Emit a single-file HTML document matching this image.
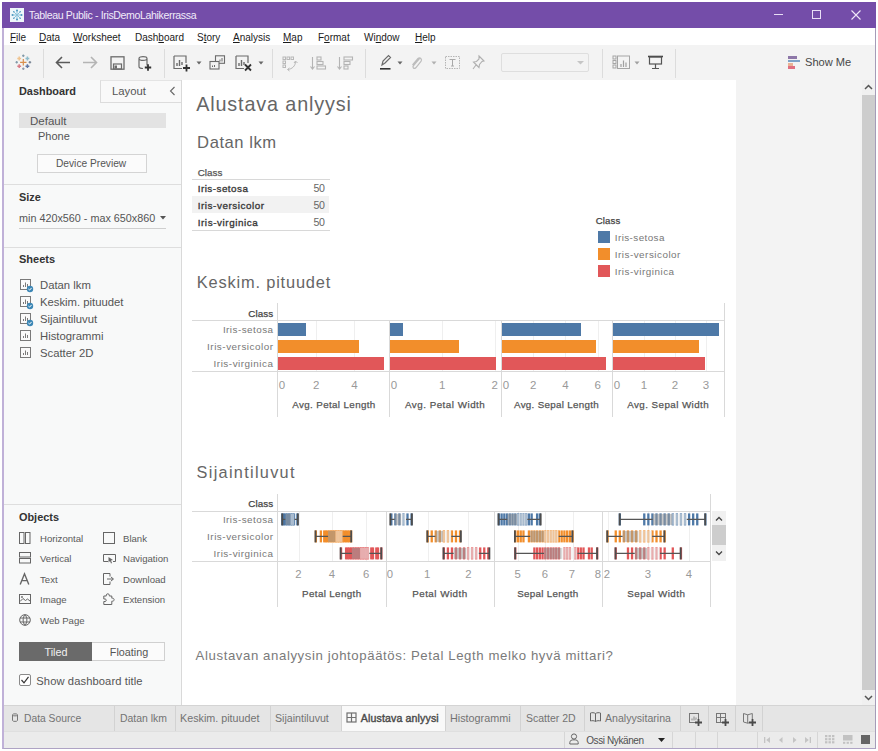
<!DOCTYPE html>
<html><head><meta charset="utf-8">
<style>
*{margin:0;padding:0;box-sizing:border-box}
html,body{width:878px;height:751px;overflow:hidden;background:#fff;font-family:"Liberation Sans",sans-serif;color:#333;position:relative}
.a{position:absolute;white-space:nowrap;line-height:normal}
svg.a{overflow:visible}
u{text-decoration:underline;text-underline-offset:1px}
</style></head><body>
<div class="a" style="left:2px;top:2px;width:874px;height:747px;background:#f0f0f0;border-left:2px solid #c0b1d8;border-right:1px solid #a59cb8;border-bottom:1px solid #aea3c4"></div>
<div class="a" style="left:2px;top:2px;width:874px;height:26px;background:#744da9;"></div>
<svg class="a" style="left:10px;top:8px;" width="14" height="14" viewBox="0 0 14 14"><rect x="0" y="0" width="14" height="14" fill="#eef6fa"/><g stroke="#8cc3dc" stroke-width="1" fill="none"><path d="M7 2.5v9M2.5 7h9M4 4l6 6M10 4l-6 6"/></g><g fill="#4b97c0"><circle cx="7" cy="2.5" r="1"/><circle cx="7" cy="11.5" r="1"/><circle cx="2.5" cy="7" r="1"/><circle cx="11.5" cy="7" r="1"/><circle cx="3.8" cy="3.8" r=".8"/><circle cx="10.2" cy="10.2" r=".8"/><circle cx="10.2" cy="3.8" r=".8"/><circle cx="3.8" cy="10.2" r=".8"/></g></svg>
<div class="a" style="left:28.80px;top:9px;font-size:10.6px;letter-spacing:-0.378px;color:#f1ebf9;">Tableau Public - IrisDemoLahikerrassa</div>
<div class="a" style="left:774px;top:14px;width:9px;height:1px;background:#e8def5;"></div>
<div class="a" style="left:812px;top:10px;width:9px;height:9px;background:transparent;border:1px solid #e8def5"></div>
<svg class="a" style="left:851px;top:10px;" width="10" height="10" viewBox="0 0 10 10"><path d="M0.5 0.5L9.5 9.5M9.5 0.5L0.5 9.5" stroke="#efe7f8" stroke-width="1.1"/></svg>
<div class="a" style="left:4px;top:28px;width:871px;height:17px;background:#ffffff;"></div>
<div class="a" style="left:10px;top:32px;font-size:10px;color:#1b1b1b;"><u>F</u>ile</div>
<div class="a" style="left:39px;top:32px;font-size:10px;color:#1b1b1b;"><u>D</u>ata</div>
<div class="a" style="left:73px;top:32px;font-size:10px;color:#1b1b1b;"><u>W</u>orksheet</div>
<div class="a" style="left:135px;top:32px;font-size:10px;color:#1b1b1b;">Dash<u>b</u>oard</div>
<div class="a" style="left:197px;top:32px;font-size:10px;color:#1b1b1b;">S<u>t</u>ory</div>
<div class="a" style="left:233px;top:32px;font-size:10px;color:#1b1b1b;"><u>A</u>nalysis</div>
<div class="a" style="left:283px;top:32px;font-size:10px;color:#1b1b1b;"><u>M</u>ap</div>
<div class="a" style="left:318px;top:32px;font-size:10px;color:#1b1b1b;">F<u>o</u>rmat</div>
<div class="a" style="left:364px;top:32px;font-size:10px;color:#1b1b1b;">Wi<u>n</u>dow</div>
<div class="a" style="left:415px;top:32px;font-size:10px;color:#1b1b1b;"><u>H</u>elp</div>
<div class="a" style="left:4px;top:45px;width:871px;height:35px;background:#f3f3f3;"></div>
<div class="a" style="left:43px;top:49px;width:1px;height:29px;background:#dcdcdc;"></div>
<div class="a" style="left:164px;top:49px;width:1px;height:29px;background:#dcdcdc;"></div>
<div class="a" style="left:272px;top:49px;width:1px;height:29px;background:#dcdcdc;"></div>
<div class="a" style="left:365px;top:49px;width:1px;height:29px;background:#dcdcdc;"></div>
<div class="a" style="left:602px;top:49px;width:1px;height:29px;background:#dcdcdc;"></div>
<div class="a" style="left:675px;top:49px;width:1px;height:29px;background:#dcdcdc;"></div>
<svg class="a" style="left:15px;top:54px;" width="16" height="16" viewBox="0 0 16 16"><path d="M5.1000000000000005 8.3H11.5M8.3 5.1000000000000005V11.5" stroke="#d9904e" stroke-width="1.2"/><path d="M2.3000000000000003 4.5H6.1M4.2 2.6V6.4" stroke="#efc38f" stroke-width="1.5"/><path d="M10.5 4.5H14.3M12.4 2.6V6.4" stroke="#8fbccb" stroke-width="1.5"/><path d="M2.3000000000000003 12.2H6.1M4.2 10.299999999999999V14.1" stroke="#d87a86" stroke-width="1.5"/><path d="M10.5 12.2H14.3M12.4 10.299999999999999V14.1" stroke="#5f78a6" stroke-width="1.5"/><path d="M7.000000000000001 1.8H9.600000000000001M8.3 0.5V3.1" stroke="#7d97a6" stroke-width="1.1"/><path d="M7.000000000000001 14.8H9.600000000000001M8.3 13.5V16.1" stroke="#8a96a8" stroke-width="1.1"/><path d="M0.3999999999999999 8.3H3.0M1.7 7.000000000000001V9.600000000000001" stroke="#7d97a6" stroke-width="1.1"/><path d="M13.6 8.3H16.2M14.9 7.000000000000001V9.600000000000001" stroke="#6c7a8c" stroke-width="1.1"/></svg>
<svg class="a" style="left:55px;top:56px;" width="16" height="13" viewBox="0 0 16 13"><path d="M1.5 6.5H15M7 1L1.5 6.5L7 12" stroke="#5a5a5a" stroke-width="1.6" fill="none"/></svg>
<svg class="a" style="left:82px;top:56px;" width="16" height="13" viewBox="0 0 16 13"><path d="M1 6.5H14.5M9 1L14.5 6.5L9 12" stroke="#b4b4b4" stroke-width="1.6" fill="none"/></svg>
<svg class="a" style="left:110px;top:56px;" width="15" height="14" viewBox="0 0 15 14"><rect x="1" y="0.8" width="13" height="12.4" fill="none" stroke="#6b6b6b" stroke-width="1.3"/><rect x="3.5" y="8" width="8" height="5" fill="none" stroke="#6b6b6b" stroke-width="1.2"/><rect x="4.5" y="9.5" width="2.5" height="3" fill="#6b6b6b"/></svg>
<svg class="a" style="left:138px;top:55px;" width="14" height="17" viewBox="0 0 14 17"><path d="M1 3.5C1 1 9 1 9 3.5V10.5M1 3.5V11.5C1 13 3.5 13.5 5 13.5M1 3.5C1 6 9 6 9 3.5" stroke="#6b6b6b" stroke-width="1.2" fill="none"/><path d="M6.8 12.5H13.2M10 9.3V15.7" stroke="#333" stroke-width="1.8"/></svg>
<svg class="a" style="left:173px;top:55px;" width="19" height="17" viewBox="0 0 19 17"><path d="M1 1V13.5H9M1 1H13V8" stroke="#6b6b6b" stroke-width="1.2" fill="none"/><path d="M4 11V8M6.5 11V5M9 10V7" stroke="#6b6b6b" stroke-width="1.4"/><path d="M10.0 13H17.0M13.5 9.5V16.5" stroke="#333" stroke-width="1.8"/></svg>
<svg class="a" style="left:196px;top:61px;" width="6" height="4" viewBox="0 0 6 4"><path d="M0.5 0.5H5.5L3 3.5Z" fill="#666"/></svg>
<svg class="a" style="left:209px;top:55px;" width="17" height="15" viewBox="0 0 17 15"><rect x="6.5" y="0.8" width="9" height="7.5" fill="#f3f3f3" stroke="#6b6b6b" stroke-width="1.1"/><rect x="1" y="6.5" width="9" height="7.5" fill="#f3f3f3" stroke="#6b6b6b" stroke-width="1.1"/><path d="M3.5 12V10.5M5.5 12V10M11 6.5V4.5M13 6.5V3" stroke="#6b6b6b" stroke-width="1"/></svg>
<svg class="a" style="left:235px;top:55px;" width="18" height="17" viewBox="0 0 18 17"><path d="M1 1V13.5H9M1 1H13V8" stroke="#6b6b6b" stroke-width="1.2" fill="none"/><path d="M4 11V8M6.5 11V5M9 10V7" stroke="#6b6b6b" stroke-width="1.4"/><path d="M10 9.5L16 15.5M16 9.5L10 15.5" stroke="#333" stroke-width="1.8"/></svg>
<svg class="a" style="left:258px;top:61px;" width="6" height="4" viewBox="0 0 6 4"><path d="M0.5 0.5H5.5L3 3.5Z" fill="#666"/></svg>
<svg class="a" style="left:282px;top:56px;" width="17" height="15" viewBox="0 0 17 15"><g fill="none" stroke="#b8b8b8" stroke-width="1"><rect x="1" y="1" width="2.5" height="2.5"/><rect x="5" y="1" width="2.5" height="2.5"/><rect x="9" y="1" width="2.5" height="2.5"/><rect x="1" y="5" width="2.5" height="2.5"/><rect x="1" y="9" width="2.5" height="2.5"/><path d="M13.5 5.5C13.5 10 10 13 6 13.5M12 7L13.5 5L15.5 7M7.5 12L5.5 13.5L7.5 15"/></g></svg>
<svg class="a" style="left:310px;top:56px;" width="17" height="15" viewBox="0 0 17 15"><g fill="none" stroke="#b4b4b4" stroke-width="1.1"><path d="M2.5 1V13M0.5 10.5L2.5 13L4.5 10.5"/><rect x="7" y="1" width="4" height="3"/><rect x="7" y="5.5" width="6" height="3"/><rect x="7" y="10" width="8.5" height="3"/></g></svg>
<svg class="a" style="left:337px;top:56px;" width="17" height="15" viewBox="0 0 17 15"><g fill="none" stroke="#b4b4b4" stroke-width="1.1"><path d="M2.5 1V13M0.5 10.5L2.5 13L4.5 10.5"/><rect x="7" y="1" width="8.5" height="3"/><rect x="7" y="5.5" width="6" height="3"/><rect x="7" y="10" width="4" height="3"/></g></svg>
<svg class="a" style="left:379px;top:54px;" width="13" height="17" viewBox="0 0 13 17"><path d="M3 11L4 7L9.5 1.5L11.5 3.5L6 9Z M3 11L6 9" stroke="#6b6b6b" stroke-width="1.2" fill="none"/><rect x="1" y="14" width="10.5" height="1.6" fill="#333"/></svg>
<svg class="a" style="left:397px;top:61px;" width="6" height="4" viewBox="0 0 6 4"><path d="M0.5 0.5H5.5L3 3.5Z" fill="#666"/></svg>
<svg class="a" style="left:410px;top:55px;" width="13" height="16" viewBox="0 0 13 16"><path d="M9.5 3.5L3.5 10.5C2 12.3 4 14.5 5.8 12.8L11 6.5C12.5 4.5 10 1.5 8 3.5L2.5 10" stroke="#bdbdbd" stroke-width="1.2" fill="none"/></svg>
<svg class="a" style="left:431px;top:61px;" width="6" height="4" viewBox="0 0 6 4"><path d="M0.5 0.5H5.5L3 3.5Z" fill="#b0b0b0"/></svg>
<svg class="a" style="left:445px;top:56px;" width="15" height="13" viewBox="0 0 15 13"><rect x="0.5" y="0.5" width="14" height="12" fill="none" stroke="#b5b5b5" stroke-dasharray="1.5 1"/><path d="M4.5 3.5H10.5M7.5 3.5V10M6 10H9" stroke="#a8a8a8" stroke-width="1"/></svg>
<svg class="a" style="left:472px;top:55px;" width="13" height="15" viewBox="0 0 13 15"><path d="M7 1L12 6L10 6.5L7.5 9.5L7 12.5L1.5 7L4.5 6.5L7 4Z M4 10L1 14" stroke="#b0b0b0" stroke-width="1.1" fill="none"/></svg>
<div class="a" style="left:501px;top:53px;width:88px;height:19px;background:#f3f3f3;border:1px solid #dedede;border-radius:2px"></div>
<svg class="a" style="left:577px;top:61px;" width="7" height="4" viewBox="0 0 7 4"><path d="M0 0H7L3.5 3.5Z" fill="#c5c5c5"/></svg>
<svg class="a" style="left:612px;top:55px;" width="19" height="15" viewBox="0 0 19 15"><g fill="none" stroke="#a5a5a5" stroke-width="1"><rect x="1" y="1" width="3" height="3"/><rect x="1" y="5.5" width="3" height="3"/><rect x="1" y="10" width="3" height="3"/><rect x="5.5" y="1" width="12" height="12.5"/></g><path d="M9 12V9M11.5 12V5.5M14 12V7.5" stroke="#a0a0a0" stroke-width="1.2"/></svg>
<svg class="a" style="left:634px;top:61px;" width="6" height="4" viewBox="0 0 6 4"><path d="M0.5 0.5H5.5L3 3.5Z" fill="#a0a0a0"/></svg>
<svg class="a" style="left:647px;top:55px;" width="17" height="15" viewBox="0 0 17 15"><path d="M1 1.5H16" stroke="#444" stroke-width="1.6"/><rect x="2.5" y="2" width="12" height="7" fill="none" stroke="#555" stroke-width="1.2"/><path d="M8.5 9V13M5 13.5H12" stroke="#555" stroke-width="1.2"/></svg>
<div class="a" style="left:788px;top:56px;width:9px;height:2.5px;background:#8d77a8;"></div>
<div class="a" style="left:788px;top:59.5px;width:12px;height:2.5px;background:#7fa2c8;"></div>
<div class="a" style="left:788px;top:63px;width:4.5px;height:2.5px;background:#eab295;"></div>
<div class="a" style="left:788px;top:66px;width:6.5px;height:2.6px;background:#e06f80;"></div>
<div class="a" style="left:805px;top:56px;font-size:11.1px;color:#474747;">Show Me</div>
<div class="a" style="left:4px;top:80px;width:178px;height:625px;background:#f8f9f9;border-right:1px solid #d9d9d9"></div>
<div class="a" style="left:100px;top:80px;width:81px;height:23px;background:#f9f9f9;border-left:1px solid #dcdcdc;border-bottom:1px solid #dcdcdc;border-top:1px solid #e4e4e4"></div>
<div class="a" style="left:19px;top:85px;font-size:10.9px;color:#333;font-weight:bold;">Dashboard</div>
<div class="a" style="left:112px;top:85px;font-size:11.3px;color:#555;">Layout</div>
<svg class="a" style="left:169px;top:86px;" width="7" height="10" viewBox="0 0 7 10"><path d="M5.5 1L1.5 5L5.5 9" stroke="#666" stroke-width="1.1" fill="none"/></svg>
<div class="a" style="left:19px;top:113px;width:147px;height:15px;background:#e3e3e3;"></div>
<div class="a" style="left:30px;top:115px;font-size:11.5px;color:#555;">Default</div>
<div class="a" style="left:38px;top:130px;font-size:11.0px;color:#555;">Phone</div>
<div class="a" style="left:37px;top:154px;width:110px;height:19px;background:#fbfbfb;border:1px solid #d4d4d4"></div>
<div class="a" style="left:56px;top:158px;font-size:10.2px;color:#555;">Device Preview</div>
<div class="a" style="left:4px;top:184px;width:177px;height:1px;background:#dedede;"></div>
<div class="a" style="left:19px;top:191px;font-size:10.9px;color:#333;font-weight:bold;">Size</div>
<div class="a" style="left:19px;top:212px;font-size:10.8px;color:#555;">min 420x560 - max 650x860</div>
<svg class="a" style="left:160px;top:216px;" width="6" height="4" viewBox="0 0 6 4"><path d="M0 0H6L3 3.5Z" fill="#555"/></svg>
<div class="a" style="left:19px;top:228px;width:147px;height:1px;background:#cfcfcf;"></div>
<div class="a" style="left:4px;top:247px;width:177px;height:1px;background:#dedede;"></div>
<div class="a" style="left:19px;top:253px;font-size:11.0px;color:#333;font-weight:bold;">Sheets</div>
<svg class="a" style="left:20px;top:279px;" width="14" height="14" viewBox="0 0 14 14"><rect x="0.5" y="0.5" width="10" height="10" fill="#fafafa" stroke="#7a7a7a" stroke-width="1"/><path d="M3.5 8V6M5.5 8V3.5M7.5 8V5" stroke="#7a7a7a" stroke-width="1"/><circle cx="10" cy="10" r="3.2" fill="#3b86b5"/><path d="M8.4 10L9.6 11.1L11.6 8.9" stroke="#fff" stroke-width="1" fill="none"/></svg>
<div class="a" style="left:40px;top:279px;font-size:11.3px;color:#555;">Datan lkm</div>
<svg class="a" style="left:20px;top:296px;" width="14" height="14" viewBox="0 0 14 14"><rect x="0.5" y="0.5" width="10" height="10" fill="#fafafa" stroke="#7a7a7a" stroke-width="1"/><path d="M3.5 8V6M5.5 8V3.5M7.5 8V5" stroke="#7a7a7a" stroke-width="1"/><circle cx="10" cy="10" r="3.2" fill="#3b86b5"/><path d="M8.4 10L9.6 11.1L11.6 8.9" stroke="#fff" stroke-width="1" fill="none"/></svg>
<div class="a" style="left:40px;top:296px;font-size:11.3px;color:#555;">Keskim. pituudet</div>
<svg class="a" style="left:20px;top:313px;" width="14" height="14" viewBox="0 0 14 14"><rect x="0.5" y="0.5" width="10" height="10" fill="#fafafa" stroke="#7a7a7a" stroke-width="1"/><path d="M3.5 8V6M5.5 8V3.5M7.5 8V5" stroke="#7a7a7a" stroke-width="1"/><circle cx="10" cy="10" r="3.2" fill="#3b86b5"/><path d="M8.4 10L9.6 11.1L11.6 8.9" stroke="#fff" stroke-width="1" fill="none"/></svg>
<div class="a" style="left:40px;top:313px;font-size:11.3px;color:#555;">Sijaintiluvut</div>
<svg class="a" style="left:20px;top:330px;" width="14" height="14" viewBox="0 0 14 14"><rect x="0.5" y="0.5" width="10" height="10" fill="#fafafa" stroke="#7a7a7a" stroke-width="1"/><path d="M3.5 8V6M5.5 8V3.5M7.5 8V5" stroke="#7a7a7a" stroke-width="1"/></svg>
<div class="a" style="left:40px;top:330px;font-size:11.3px;color:#555;">Histogrammi</div>
<svg class="a" style="left:20px;top:347px;" width="14" height="14" viewBox="0 0 14 14"><rect x="0.5" y="0.5" width="10" height="10" fill="#fafafa" stroke="#7a7a7a" stroke-width="1"/><path d="M3.5 8V6M5.5 8V3.5M7.5 8V5" stroke="#7a7a7a" stroke-width="1"/></svg>
<div class="a" style="left:40px;top:347px;font-size:11.3px;color:#555;">Scatter 2D</div>
<div class="a" style="left:4px;top:504px;width:177px;height:1px;background:#dedede;"></div>
<div class="a" style="left:19px;top:511px;font-size:10.9px;color:#333;font-weight:bold;">Objects</div>
<svg class="a" style="left:19px;top:532px;" width="12" height="12" viewBox="0 0 12 12"><rect x="0.5" y="0.5" width="4.5" height="11" fill="none" stroke="#666"/><rect x="6.5" y="0.5" width="4.5" height="11" fill="none" stroke="#666"/></svg>
<div class="a" style="left:40px;top:533px;font-size:9.6px;color:#5a5a5a;">Horizontal</div>
<svg class="a" style="left:103px;top:532px;" width="13" height="12" viewBox="0 0 13 12"><rect x="0.5" y="0.5" width="11" height="11" fill="none" stroke="#666"/></svg>
<div class="a" style="left:123px;top:533px;font-size:9.6px;color:#5a5a5a;">Blank</div>
<svg class="a" style="left:19px;top:552px;" width="12" height="12" viewBox="0 0 12 12"><rect x="0.5" y="0.5" width="11" height="4.5" fill="none" stroke="#666"/><rect x="0.5" y="6.5" width="11" height="4.5" fill="none" stroke="#666"/></svg>
<div class="a" style="left:40px;top:553px;font-size:9.6px;color:#5a5a5a;">Vertical</div>
<svg class="a" style="left:103px;top:552px;" width="13" height="12" viewBox="0 0 13 12"><path d="M5 9.5H0.5V2.5H12.5V9.5H10" stroke="#666" fill="none"/><path d="M5.5 5L10 8L8 8.5L9 11L8 11.5L7 9L5.5 10.5Z" fill="#666"/></svg>
<div class="a" style="left:123px;top:553px;font-size:9.6px;color:#5a5a5a;">Navigation</div>
<svg class="a" style="left:19px;top:573px;" width="12" height="12" viewBox="0 0 12 12"><path d="M1.2 11.5L5.5 0.8L9.8 11.5M2.8 7.6H8.2" stroke="#666" stroke-width="1.4" fill="none"/></svg>
<div class="a" style="left:40px;top:574px;font-size:9.6px;color:#5a5a5a;">Text</div>
<svg class="a" style="left:103px;top:573px;" width="13" height="12" viewBox="0 0 13 12"><path d="M7 3.5V0.5H0.5V11.5H7V8.5" stroke="#666" fill="none"/><path d="M4 6H10M8 4L10.5 6L8 8" stroke="#666" fill="none"/></svg>
<div class="a" style="left:123px;top:574px;font-size:9.6px;color:#5a5a5a;">Download</div>
<svg class="a" style="left:19px;top:593px;" width="12" height="12" viewBox="0 0 12 12"><rect x="0.5" y="1.5" width="11" height="9" fill="none" stroke="#666"/><path d="M1 8.5L4 5.5L6.5 7.5L8.5 6L11 8" stroke="#666" fill="none"/><circle cx="3" cy="4" r="0.9" fill="#666"/></svg>
<div class="a" style="left:40px;top:594px;font-size:9.6px;color:#5a5a5a;">Image</div>
<svg class="a" style="left:103px;top:593px;" width="13" height="12" viewBox="0 0 13 12"><path d="M0.8 11.5V8.5H2.2C3.6 8.5 3.6 6 2.2 6H0.8V3H3.3V2.2C3.3 0.3 6.3 0.3 6.3 2.2V3H8.8V5.2H9.6C11.6 5.2 11.6 8.2 9.6 8.2H8.8V11.5Z" stroke="#666" fill="none"/></svg>
<div class="a" style="left:123px;top:594px;font-size:9.6px;color:#5a5a5a;">Extension</div>
<svg class="a" style="left:19px;top:614px;" width="12" height="12" viewBox="0 0 12 12"><circle cx="6" cy="6" r="5.3" fill="none" stroke="#666"/><path d="M1 4H11M1 8H11M6 0.7C3.5 3.5 3.5 8.5 6 11.3M6 0.7C8.5 3.5 8.5 8.5 6 11.3" stroke="#666" fill="none"/></svg>
<div class="a" style="left:40px;top:615px;font-size:9.6px;color:#5a5a5a;">Web Page</div>
<div class="a" style="left:19px;top:642px;width:73px;height:19px;background:#6a6a6a;"></div>
<div class="a" style="left:92px;top:642px;width:73px;height:19px;background:#fbfbfb;border:1px solid #d0d0d0;border-left:none"></div>
<div class="a" style="left:-94px;width:300px;text-align:center;top:646px;font-size:10.8px;color:#f0f0f0;">Tiled</div>
<div class="a" style="left:-21px;width:300px;text-align:center;top:646px;font-size:10.8px;color:#555;">Floating</div>
<div class="a" style="left:19px;top:674px;width:12px;height:12px;background:#fff;border:1px solid #8a8a8a;border-radius:2px"></div>
<svg class="a" style="left:19px;top:674px;" width="12" height="12" viewBox="0 0 12 12"><path d="M2.5 6L5 8.8L9.5 2.8" stroke="#333" stroke-width="1.2" fill="none"/></svg>
<div class="a" style="left:36.30px;top:675px;font-size:11.2px;letter-spacing:0.089px;color:#555;">Show dashboard title</div>
<div class="a" style="left:182px;top:80px;width:554px;height:625px;background:#ffffff;"></div>
<div class="a" style="left:736px;top:80px;width:126px;height:625px;background:#f3f3f3;"></div>
<div class="a" style="left:862px;top:80px;width:13px;height:625px;background:#f0f0f0;"></div>
<div class="a" style="left:862px;top:95px;width:13px;height:595px;background:#cdcdcd;"></div>
<svg class="a" style="left:864px;top:84px;" width="9" height="6" viewBox="0 0 9 6"><path d="M1 5L4.5 1.5L8 5" stroke="#555" stroke-width="1.5" fill="none"/></svg>
<svg class="a" style="left:864px;top:695px;" width="9" height="6" viewBox="0 0 9 6"><path d="M1 1L4.5 4.5L8 1" stroke="#555" stroke-width="1.5" fill="none"/></svg>
<div class="a" style="left:196.20px;top:93px;font-size:19.8px;letter-spacing:0.862px;color:#666;">Alustava anlyysi</div>
<div class="a" style="left:197.10px;top:133px;font-size:16.6px;letter-spacing:0.550px;color:#666;">Datan lkm</div>
<div class="a" style="left:197.70px;top:167px;font-size:9.8px;letter-spacing:0.075px;color:#555;-webkit-text-stroke:0.25px currentColor;">Class</div>
<div class="a" style="left:192px;top:179px;width:138px;height:1px;background:#d8d8d8;"></div>
<div class="a" style="left:192px;top:196px;width:137px;height:17px;background:#f2f2f2;"></div>
<div class="a" style="left:192px;top:230px;width:138px;height:1px;background:#d8d8d8;"></div>
<div class="a" style="left:197.70px;top:183px;font-size:9.9px;letter-spacing:0.471px;color:#3a3a3a;-webkit-text-stroke:0.35px currentColor;">Iris-setosa</div>
<div class="a" style="left:313.40px;top:182px;font-size:10.6px;letter-spacing:-0.166px;color:#666;">50</div>
<div class="a" style="left:197.70px;top:200px;font-size:9.9px;letter-spacing:0.553px;color:#3a3a3a;-webkit-text-stroke:0.35px currentColor;">Iris-versicolor</div>
<div class="a" style="left:313.40px;top:199px;font-size:10.6px;letter-spacing:-0.166px;color:#666;">50</div>
<div class="a" style="left:197.70px;top:217px;font-size:9.9px;letter-spacing:0.572px;color:#3a3a3a;-webkit-text-stroke:0.35px currentColor;">Iris-virginica</div>
<div class="a" style="left:313.40px;top:216px;font-size:10.6px;letter-spacing:-0.166px;color:#666;">50</div>
<div class="a" style="left:595.70px;top:215px;font-size:9.6px;letter-spacing:0.125px;color:#444;-webkit-text-stroke:0.25px currentColor;">Class</div>
<div class="a" style="left:598px;top:231px;width:12px;height:12px;background:#4e79a7;"></div>
<div class="a" style="left:614.80px;top:232px;font-size:9.9px;letter-spacing:0.411px;color:#777;">Iris-setosa</div>
<div class="a" style="left:598px;top:248px;width:12px;height:12px;background:#f28e2b;"></div>
<div class="a" style="left:614.80px;top:249px;font-size:9.9px;letter-spacing:0.489px;color:#777;">Iris-versicolor</div>
<div class="a" style="left:598px;top:265px;width:12px;height:12px;background:#e15759;"></div>
<div class="a" style="left:614.80px;top:266px;font-size:9.9px;letter-spacing:0.510px;color:#777;">Iris-virginica</div>
<div class="a" style="left:196.80px;top:273px;font-size:16.4px;letter-spacing:0.821px;color:#666;">Keskim. pituudet</div>
<div class="a" style="left:192px;top:320px;width:533px;height:1px;background:#d9d9d9;"></div>
<div class="a" style="left:192px;top:371px;width:533px;height:1px;background:#d9d9d9;"></div>
<div class="a" style="left:277px;top:303px;width:1px;height:114px;background:#d9d9d9;"></div>
<div class="a" style="left:724px;top:303px;width:1px;height:114px;background:#d9d9d9;"></div>
<div class="a" style="left:389px;top:320px;width:1px;height:97px;background:#d9d9d9;"></div>
<div class="a" style="left:501px;top:320px;width:1px;height:97px;background:#d9d9d9;"></div>
<div class="a" style="left:612px;top:320px;width:1px;height:97px;background:#d9d9d9;"></div>
<div class="a" style="left:248.20px;top:308px;font-size:9.8px;letter-spacing:0.125px;color:#444;-webkit-text-stroke:0.25px currentColor;">Class</div>
<div class="a" style="left:222.90px;top:324px;font-size:9.9px;letter-spacing:0.461px;color:#777;">Iris-setosa</div>
<div class="a" style="left:207.10px;top:341px;font-size:9.9px;letter-spacing:0.517px;color:#777;">Iris-versicolor</div>
<div class="a" style="left:213.60px;top:358px;font-size:9.9px;letter-spacing:0.518px;color:#777;">Iris-virginica</div>
<div class="a" style="left:316px;top:321px;width:1px;height:50px;background:#efefef;"></div>
<div class="a" style="left:354px;top:321px;width:1px;height:50px;background:#efefef;"></div>
<div class="a" style="left:278px;top:323px;width:28px;height:13px;background:#4e79a7;"></div>
<div class="a" style="left:278px;top:340px;width:81px;height:13px;background:#f28e2b;"></div>
<div class="a" style="left:278px;top:357px;width:106px;height:13px;background:#e15759;"></div>
<div class="a" style="left:132px;width:300px;text-align:center;top:379px;font-size:11.5px;color:#999;">0</div>
<div class="a" style="left:166.2px;width:300px;text-align:center;top:379px;font-size:11.5px;color:#999;">2</div>
<div class="a" style="left:204.39999999999998px;width:300px;text-align:center;top:379px;font-size:11.5px;color:#999;">4</div>
<div class="a" style="left:292.30px;top:399px;font-size:9.8px;letter-spacing:0.364px;color:#555;-webkit-text-stroke:0.25px currentColor;">Avg. Petal Length</div>
<div class="a" style="left:442px;top:321px;width:1px;height:50px;background:#efefef;"></div>
<div class="a" style="left:495px;top:321px;width:1px;height:50px;background:#efefef;"></div>
<div class="a" style="left:390px;top:323px;width:13px;height:13px;background:#4e79a7;"></div>
<div class="a" style="left:390px;top:340px;width:69px;height:13px;background:#f28e2b;"></div>
<div class="a" style="left:390px;top:357px;width:106px;height:13px;background:#e15759;"></div>
<div class="a" style="left:244px;width:300px;text-align:center;top:379px;font-size:11.5px;color:#999;">0</div>
<div class="a" style="left:292.3px;width:300px;text-align:center;top:379px;font-size:11.5px;color:#999;">1</div>
<div class="a" style="left:344.6px;width:300px;text-align:center;top:379px;font-size:11.5px;color:#999;">2</div>
<div class="a" style="left:404.95px;top:399px;font-size:9.8px;letter-spacing:0.508px;color:#555;-webkit-text-stroke:0.25px currentColor;">Avg. Petal Width</div>
<div class="a" style="left:533px;top:321px;width:1px;height:50px;background:#efefef;"></div>
<div class="a" style="left:565px;top:321px;width:1px;height:50px;background:#efefef;"></div>
<div class="a" style="left:598px;top:321px;width:1px;height:50px;background:#efefef;"></div>
<div class="a" style="left:502px;top:323px;width:79px;height:13px;background:#4e79a7;"></div>
<div class="a" style="left:502px;top:340px;width:94px;height:13px;background:#f28e2b;"></div>
<div class="a" style="left:502px;top:357px;width:104px;height:13px;background:#e15759;"></div>
<div class="a" style="left:356px;width:300px;text-align:center;top:379px;font-size:11.5px;color:#999;">0</div>
<div class="a" style="left:383.20000000000005px;width:300px;text-align:center;top:379px;font-size:11.5px;color:#999;">2</div>
<div class="a" style="left:415.4px;width:300px;text-align:center;top:379px;font-size:11.5px;color:#999;">4</div>
<div class="a" style="left:447.6px;width:300px;text-align:center;top:379px;font-size:11.5px;color:#999;">6</div>
<div class="a" style="left:514.00px;top:399px;font-size:9.8px;letter-spacing:0.305px;color:#555;-webkit-text-stroke:0.25px currentColor;">Avg. Sepal Length</div>
<div class="a" style="left:644px;top:321px;width:1px;height:50px;background:#efefef;"></div>
<div class="a" style="left:675px;top:321px;width:1px;height:50px;background:#efefef;"></div>
<div class="a" style="left:706px;top:321px;width:1px;height:50px;background:#efefef;"></div>
<div class="a" style="left:613px;top:323px;width:106px;height:13px;background:#4e79a7;"></div>
<div class="a" style="left:613px;top:340px;width:86px;height:13px;background:#f28e2b;"></div>
<div class="a" style="left:613px;top:357px;width:92px;height:13px;background:#e15759;"></div>
<div class="a" style="left:467px;width:300px;text-align:center;top:379px;font-size:11.5px;color:#999;">0</div>
<div class="a" style="left:494.0px;width:300px;text-align:center;top:379px;font-size:11.5px;color:#999;">1</div>
<div class="a" style="left:525.0px;width:300px;text-align:center;top:379px;font-size:11.5px;color:#999;">2</div>
<div class="a" style="left:556.0px;width:300px;text-align:center;top:379px;font-size:11.5px;color:#999;">3</div>
<div class="a" style="left:627.25px;top:399px;font-size:9.8px;letter-spacing:0.432px;color:#555;-webkit-text-stroke:0.25px currentColor;">Avg. Sepal Width</div>
<div class="a" style="left:196.60px;top:463px;font-size:16.3px;letter-spacing:1.293px;color:#666;">Sijaintiluvut</div>
<div class="a" style="left:192px;top:511px;width:518px;height:1px;background:#d9d9d9;"></div>
<div class="a" style="left:192px;top:561px;width:518px;height:1px;background:#d9d9d9;"></div>
<div class="a" style="left:277px;top:494px;width:1px;height:113px;background:#d9d9d9;"></div>
<div class="a" style="left:710px;top:494px;width:1px;height:113px;background:#d9d9d9;"></div>
<div class="a" style="left:386px;top:511px;width:1px;height:96px;background:#d9d9d9;"></div>
<div class="a" style="left:494px;top:511px;width:1px;height:96px;background:#d9d9d9;"></div>
<div class="a" style="left:602px;top:511px;width:1px;height:96px;background:#d9d9d9;"></div>
<div class="a" style="left:299px;top:512px;width:1px;height:49px;background:#efefef;"></div>
<div class="a" style="left:332px;top:512px;width:1px;height:49px;background:#efefef;"></div>
<div class="a" style="left:366px;top:512px;width:1px;height:49px;background:#efefef;"></div>
<div class="a" style="left:428px;top:512px;width:1px;height:49px;background:#efefef;"></div>
<div class="a" style="left:468px;top:512px;width:1px;height:49px;background:#efefef;"></div>
<div class="a" style="left:518px;top:512px;width:1px;height:49px;background:#efefef;"></div>
<div class="a" style="left:545px;top:512px;width:1px;height:49px;background:#efefef;"></div>
<div class="a" style="left:573px;top:512px;width:1px;height:49px;background:#efefef;"></div>
<div class="a" style="left:608px;top:512px;width:1px;height:49px;background:#efefef;"></div>
<div class="a" style="left:648px;top:512px;width:1px;height:49px;background:#efefef;"></div>
<div class="a" style="left:689px;top:512px;width:1px;height:49px;background:#efefef;"></div>
<div class="a" style="left:248.20px;top:498px;font-size:9.8px;letter-spacing:0.125px;color:#444;-webkit-text-stroke:0.25px currentColor;">Class</div>
<div class="a" style="left:222.90px;top:514px;font-size:9.9px;letter-spacing:0.461px;color:#777;">Iris-setosa</div>
<div class="a" style="left:207.10px;top:531px;font-size:9.9px;letter-spacing:0.517px;color:#777;">Iris-versicolor</div>
<div class="a" style="left:213.60px;top:548px;font-size:9.9px;letter-spacing:0.518px;color:#777;">Iris-virginica</div>
<svg class="a" style="left:0;top:0" width="878" height="751" viewBox="0 0 878 751"><rect x="281.10" y="513.4" width="2.3" height="12" fill="#4e79a7" fill-opacity="1"/><rect x="282.78" y="513.4" width="2.3" height="12" fill="#4e79a7" fill-opacity="1"/><rect x="284.46" y="513.4" width="2.3" height="12" fill="#4e79a7" fill-opacity="1"/><rect x="286.14" y="513.4" width="2.3" height="12" fill="#4e79a7" fill-opacity="1"/><rect x="287.82" y="513.4" width="2.3" height="12" fill="#4e79a7" fill-opacity="1"/><rect x="289.50" y="513.4" width="2.3" height="12" fill="#4e79a7" fill-opacity="1"/><rect x="291.18" y="513.4" width="2.3" height="12" fill="#4e79a7" fill-opacity="1"/><rect x="292.86" y="513.4" width="2.3" height="12" fill="#4e79a7" fill-opacity="1"/><rect x="296.22" y="513.4" width="2.3" height="12" fill="#4e79a7" fill-opacity="1"/><rect x="314.70" y="530.4" width="2.3" height="12" fill="#f28e2b" fill-opacity="1"/><rect x="319.74" y="530.4" width="2.3" height="12" fill="#f28e2b" fill-opacity="1"/><rect x="323.10" y="530.4" width="2.3" height="12" fill="#f28e2b" fill-opacity="1"/><rect x="324.78" y="530.4" width="2.3" height="12" fill="#f28e2b" fill-opacity="1"/><rect x="326.46" y="530.4" width="2.3" height="12" fill="#f28e2b" fill-opacity="1"/><rect x="328.14" y="530.4" width="2.3" height="12" fill="#f28e2b" fill-opacity="1"/><rect x="329.82" y="530.4" width="2.3" height="12" fill="#f28e2b" fill-opacity="1"/><rect x="331.50" y="530.4" width="2.3" height="12" fill="#f28e2b" fill-opacity="1"/><rect x="333.18" y="530.4" width="2.3" height="12" fill="#f28e2b" fill-opacity="1"/><rect x="334.86" y="530.4" width="2.3" height="12" fill="#f28e2b" fill-opacity="1"/><rect x="336.54" y="530.4" width="2.3" height="12" fill="#f28e2b" fill-opacity="1"/><rect x="338.22" y="530.4" width="2.3" height="12" fill="#f28e2b" fill-opacity="1"/><rect x="339.90" y="530.4" width="2.3" height="12" fill="#f28e2b" fill-opacity="1"/><rect x="341.58" y="530.4" width="2.3" height="12" fill="#f28e2b" fill-opacity="1"/><rect x="343.26" y="530.4" width="2.3" height="12" fill="#f28e2b" fill-opacity="1"/><rect x="344.94" y="530.4" width="2.3" height="12" fill="#f28e2b" fill-opacity="1"/><rect x="346.62" y="530.4" width="2.3" height="12" fill="#f28e2b" fill-opacity="1"/><rect x="348.30" y="530.4" width="2.3" height="12" fill="#f28e2b" fill-opacity="1"/><rect x="349.98" y="530.4" width="2.3" height="12" fill="#f28e2b" fill-opacity="1"/><rect x="339.90" y="547.4" width="2.3" height="12" fill="#e15759" fill-opacity="1"/><rect x="344.94" y="547.4" width="2.3" height="12" fill="#e15759" fill-opacity="1"/><rect x="346.62" y="547.4" width="2.3" height="12" fill="#e15759" fill-opacity="1"/><rect x="348.30" y="547.4" width="2.3" height="12" fill="#e15759" fill-opacity="1"/><rect x="349.98" y="547.4" width="2.3" height="12" fill="#e15759" fill-opacity="1"/><rect x="351.66" y="547.4" width="2.3" height="12" fill="#e15759" fill-opacity="1"/><rect x="353.34" y="547.4" width="2.3" height="12" fill="#e15759" fill-opacity="1"/><rect x="355.02" y="547.4" width="2.3" height="12" fill="#e15759" fill-opacity="1"/><rect x="356.70" y="547.4" width="2.3" height="12" fill="#e15759" fill-opacity="1"/><rect x="358.38" y="547.4" width="2.3" height="12" fill="#e15759" fill-opacity="1"/><rect x="360.06" y="547.4" width="2.3" height="12" fill="#e15759" fill-opacity="1"/><rect x="361.74" y="547.4" width="2.3" height="12" fill="#e15759" fill-opacity="1"/><rect x="363.42" y="547.4" width="2.3" height="12" fill="#e15759" fill-opacity="1"/><rect x="365.10" y="547.4" width="2.3" height="12" fill="#e15759" fill-opacity="1"/><rect x="366.78" y="547.4" width="2.3" height="12" fill="#e15759" fill-opacity="1"/><rect x="370.14" y="547.4" width="2.3" height="12" fill="#e15759" fill-opacity="1"/><rect x="371.82" y="547.4" width="2.3" height="12" fill="#e15759" fill-opacity="1"/><rect x="375.18" y="547.4" width="2.3" height="12" fill="#e15759" fill-opacity="1"/><rect x="376.86" y="547.4" width="2.3" height="12" fill="#e15759" fill-opacity="1"/><rect x="380.22" y="547.4" width="2.3" height="12" fill="#e15759" fill-opacity="1"/><rect x="390.19" y="513.4" width="2.3" height="12" fill="#4e79a7" fill-opacity="1"/><rect x="394.23" y="513.4" width="2.3" height="12" fill="#4e79a7" fill-opacity="1"/><rect x="398.27" y="513.4" width="2.3" height="12" fill="#4e79a7" fill-opacity="1"/><rect x="402.31" y="513.4" width="2.3" height="12" fill="#4e79a7" fill-opacity="1"/><rect x="406.35" y="513.4" width="2.3" height="12" fill="#4e79a7" fill-opacity="1"/><rect x="410.39" y="513.4" width="2.3" height="12" fill="#4e79a7" fill-opacity="1"/><rect x="426.55" y="530.4" width="2.3" height="12" fill="#f28e2b" fill-opacity="1"/><rect x="430.59" y="530.4" width="2.3" height="12" fill="#f28e2b" fill-opacity="1"/><rect x="434.63" y="530.4" width="2.3" height="12" fill="#f28e2b" fill-opacity="1"/><rect x="438.67" y="530.4" width="2.3" height="12" fill="#f28e2b" fill-opacity="1"/><rect x="442.71" y="530.4" width="2.3" height="12" fill="#f28e2b" fill-opacity="1"/><rect x="446.75" y="530.4" width="2.3" height="12" fill="#f28e2b" fill-opacity="1"/><rect x="450.79" y="530.4" width="2.3" height="12" fill="#f28e2b" fill-opacity="1"/><rect x="454.83" y="530.4" width="2.3" height="12" fill="#f28e2b" fill-opacity="1"/><rect x="458.87" y="530.4" width="2.3" height="12" fill="#f28e2b" fill-opacity="1"/><rect x="442.71" y="547.4" width="2.3" height="12" fill="#e15759" fill-opacity="1"/><rect x="446.75" y="547.4" width="2.3" height="12" fill="#e15759" fill-opacity="1"/><rect x="450.79" y="547.4" width="2.3" height="12" fill="#e15759" fill-opacity="1"/><rect x="454.83" y="547.4" width="2.3" height="12" fill="#e15759" fill-opacity="1"/><rect x="458.87" y="547.4" width="2.3" height="12" fill="#e15759" fill-opacity="1"/><rect x="462.91" y="547.4" width="2.3" height="12" fill="#e15759" fill-opacity="1"/><rect x="466.95" y="547.4" width="2.3" height="12" fill="#e15759" fill-opacity="1"/><rect x="470.99" y="547.4" width="2.3" height="12" fill="#e15759" fill-opacity="1"/><rect x="475.03" y="547.4" width="2.3" height="12" fill="#e15759" fill-opacity="1"/><rect x="479.07" y="547.4" width="2.3" height="12" fill="#e15759" fill-opacity="1"/><rect x="483.11" y="547.4" width="2.3" height="12" fill="#e15759" fill-opacity="1"/><rect x="487.15" y="547.4" width="2.3" height="12" fill="#e15759" fill-opacity="1"/><rect x="497.74" y="513.4" width="2.3" height="12" fill="#4e79a7" fill-opacity="1"/><rect x="500.47" y="513.4" width="2.3" height="12" fill="#4e79a7" fill-opacity="1"/><rect x="503.20" y="513.4" width="2.3" height="12" fill="#4e79a7" fill-opacity="1"/><rect x="505.93" y="513.4" width="2.3" height="12" fill="#4e79a7" fill-opacity="1"/><rect x="508.66" y="513.4" width="2.3" height="12" fill="#4e79a7" fill-opacity="1"/><rect x="511.39" y="513.4" width="2.3" height="12" fill="#4e79a7" fill-opacity="1"/><rect x="514.12" y="513.4" width="2.3" height="12" fill="#4e79a7" fill-opacity="1"/><rect x="516.85" y="513.4" width="2.3" height="12" fill="#4e79a7" fill-opacity="1"/><rect x="519.58" y="513.4" width="2.3" height="12" fill="#4e79a7" fill-opacity="1"/><rect x="522.31" y="513.4" width="2.3" height="12" fill="#4e79a7" fill-opacity="1"/><rect x="525.04" y="513.4" width="2.3" height="12" fill="#4e79a7" fill-opacity="1"/><rect x="527.77" y="513.4" width="2.3" height="12" fill="#4e79a7" fill-opacity="1"/><rect x="530.50" y="513.4" width="2.3" height="12" fill="#4e79a7" fill-opacity="1"/><rect x="535.96" y="513.4" width="2.3" height="12" fill="#4e79a7" fill-opacity="1"/><rect x="538.69" y="513.4" width="2.3" height="12" fill="#4e79a7" fill-opacity="1"/><rect x="514.12" y="530.4" width="2.3" height="12" fill="#f28e2b" fill-opacity="1"/><rect x="516.85" y="530.4" width="2.3" height="12" fill="#f28e2b" fill-opacity="1"/><rect x="519.58" y="530.4" width="2.3" height="12" fill="#f28e2b" fill-opacity="1"/><rect x="522.31" y="530.4" width="2.3" height="12" fill="#f28e2b" fill-opacity="1"/><rect x="527.77" y="530.4" width="2.3" height="12" fill="#f28e2b" fill-opacity="1"/><rect x="530.50" y="530.4" width="2.3" height="12" fill="#f28e2b" fill-opacity="1"/><rect x="533.23" y="530.4" width="2.3" height="12" fill="#f28e2b" fill-opacity="1"/><rect x="535.96" y="530.4" width="2.3" height="12" fill="#f28e2b" fill-opacity="1"/><rect x="538.69" y="530.4" width="2.3" height="12" fill="#f28e2b" fill-opacity="1"/><rect x="541.42" y="530.4" width="2.3" height="12" fill="#f28e2b" fill-opacity="1"/><rect x="544.15" y="530.4" width="2.3" height="12" fill="#f28e2b" fill-opacity="1"/><rect x="546.88" y="530.4" width="2.3" height="12" fill="#f28e2b" fill-opacity="1"/><rect x="549.61" y="530.4" width="2.3" height="12" fill="#f28e2b" fill-opacity="1"/><rect x="552.34" y="530.4" width="2.3" height="12" fill="#f28e2b" fill-opacity="1"/><rect x="555.07" y="530.4" width="2.3" height="12" fill="#f28e2b" fill-opacity="1"/><rect x="557.80" y="530.4" width="2.3" height="12" fill="#f28e2b" fill-opacity="1"/><rect x="560.53" y="530.4" width="2.3" height="12" fill="#f28e2b" fill-opacity="1"/><rect x="563.26" y="530.4" width="2.3" height="12" fill="#f28e2b" fill-opacity="1"/><rect x="565.99" y="530.4" width="2.3" height="12" fill="#f28e2b" fill-opacity="1"/><rect x="568.72" y="530.4" width="2.3" height="12" fill="#f28e2b" fill-opacity="1"/><rect x="571.45" y="530.4" width="2.3" height="12" fill="#f28e2b" fill-opacity="1"/><rect x="514.12" y="547.4" width="2.3" height="12" fill="#e15759" fill-opacity="1"/><rect x="533.23" y="547.4" width="2.3" height="12" fill="#e15759" fill-opacity="1"/><rect x="535.96" y="547.4" width="2.3" height="12" fill="#e15759" fill-opacity="1"/><rect x="538.69" y="547.4" width="2.3" height="12" fill="#e15759" fill-opacity="1"/><rect x="541.42" y="547.4" width="2.3" height="12" fill="#e15759" fill-opacity="1"/><rect x="544.15" y="547.4" width="2.3" height="12" fill="#e15759" fill-opacity="1"/><rect x="546.88" y="547.4" width="2.3" height="12" fill="#e15759" fill-opacity="1"/><rect x="549.61" y="547.4" width="2.3" height="12" fill="#e15759" fill-opacity="1"/><rect x="552.34" y="547.4" width="2.3" height="12" fill="#e15759" fill-opacity="1"/><rect x="555.07" y="547.4" width="2.3" height="12" fill="#e15759" fill-opacity="1"/><rect x="557.80" y="547.4" width="2.3" height="12" fill="#e15759" fill-opacity="1"/><rect x="563.26" y="547.4" width="2.3" height="12" fill="#e15759" fill-opacity="1"/><rect x="565.99" y="547.4" width="2.3" height="12" fill="#e15759" fill-opacity="1"/><rect x="568.72" y="547.4" width="2.3" height="12" fill="#e15759" fill-opacity="1"/><rect x="574.18" y="547.4" width="2.3" height="12" fill="#e15759" fill-opacity="1"/><rect x="576.91" y="547.4" width="2.3" height="12" fill="#e15759" fill-opacity="1"/><rect x="579.64" y="547.4" width="2.3" height="12" fill="#e15759" fill-opacity="1"/><rect x="582.37" y="547.4" width="2.3" height="12" fill="#e15759" fill-opacity="1"/><rect x="587.83" y="547.4" width="2.3" height="12" fill="#e15759" fill-opacity="1"/><rect x="590.56" y="547.4" width="2.3" height="12" fill="#e15759" fill-opacity="1"/><rect x="596.02" y="547.4" width="2.3" height="12" fill="#e15759" fill-opacity="1"/><rect x="618.68" y="513.4" width="2.3" height="12" fill="#4e79a7" fill-opacity="1"/><rect x="643.12" y="513.4" width="2.3" height="12" fill="#4e79a7" fill-opacity="1"/><rect x="647.20" y="513.4" width="2.3" height="12" fill="#4e79a7" fill-opacity="1"/><rect x="651.28" y="513.4" width="2.3" height="12" fill="#4e79a7" fill-opacity="1"/><rect x="655.35" y="513.4" width="2.3" height="12" fill="#4e79a7" fill-opacity="1"/><rect x="659.43" y="513.4" width="2.3" height="12" fill="#4e79a7" fill-opacity="1"/><rect x="663.50" y="513.4" width="2.3" height="12" fill="#4e79a7" fill-opacity="1"/><rect x="667.58" y="513.4" width="2.3" height="12" fill="#4e79a7" fill-opacity="1"/><rect x="671.65" y="513.4" width="2.3" height="12" fill="#4e79a7" fill-opacity="1"/><rect x="675.73" y="513.4" width="2.3" height="12" fill="#4e79a7" fill-opacity="1"/><rect x="679.80" y="513.4" width="2.3" height="12" fill="#4e79a7" fill-opacity="1"/><rect x="683.88" y="513.4" width="2.3" height="12" fill="#4e79a7" fill-opacity="1"/><rect x="687.95" y="513.4" width="2.3" height="12" fill="#4e79a7" fill-opacity="1"/><rect x="692.02" y="513.4" width="2.3" height="12" fill="#4e79a7" fill-opacity="1"/><rect x="696.10" y="513.4" width="2.3" height="12" fill="#4e79a7" fill-opacity="1"/><rect x="704.25" y="513.4" width="2.3" height="12" fill="#4e79a7" fill-opacity="1"/><rect x="606.45" y="530.4" width="2.3" height="12" fill="#f28e2b" fill-opacity="1"/><rect x="614.60" y="530.4" width="2.3" height="12" fill="#f28e2b" fill-opacity="1"/><rect x="618.68" y="530.4" width="2.3" height="12" fill="#f28e2b" fill-opacity="1"/><rect x="622.75" y="530.4" width="2.3" height="12" fill="#f28e2b" fill-opacity="1"/><rect x="626.83" y="530.4" width="2.3" height="12" fill="#f28e2b" fill-opacity="1"/><rect x="630.90" y="530.4" width="2.3" height="12" fill="#f28e2b" fill-opacity="1"/><rect x="634.98" y="530.4" width="2.3" height="12" fill="#f28e2b" fill-opacity="1"/><rect x="639.05" y="530.4" width="2.3" height="12" fill="#f28e2b" fill-opacity="1"/><rect x="643.12" y="530.4" width="2.3" height="12" fill="#f28e2b" fill-opacity="1"/><rect x="647.20" y="530.4" width="2.3" height="12" fill="#f28e2b" fill-opacity="1"/><rect x="651.28" y="530.4" width="2.3" height="12" fill="#f28e2b" fill-opacity="1"/><rect x="655.35" y="530.4" width="2.3" height="12" fill="#f28e2b" fill-opacity="1"/><rect x="659.43" y="530.4" width="2.3" height="12" fill="#f28e2b" fill-opacity="1"/><rect x="663.50" y="530.4" width="2.3" height="12" fill="#f28e2b" fill-opacity="1"/><rect x="614.60" y="547.4" width="2.3" height="12" fill="#e15759" fill-opacity="1"/><rect x="626.83" y="547.4" width="2.3" height="12" fill="#e15759" fill-opacity="1"/><rect x="630.90" y="547.4" width="2.3" height="12" fill="#e15759" fill-opacity="1"/><rect x="634.98" y="547.4" width="2.3" height="12" fill="#e15759" fill-opacity="1"/><rect x="639.05" y="547.4" width="2.3" height="12" fill="#e15759" fill-opacity="1"/><rect x="643.12" y="547.4" width="2.3" height="12" fill="#e15759" fill-opacity="1"/><rect x="647.20" y="547.4" width="2.3" height="12" fill="#e15759" fill-opacity="1"/><rect x="651.28" y="547.4" width="2.3" height="12" fill="#e15759" fill-opacity="1"/><rect x="655.35" y="547.4" width="2.3" height="12" fill="#e15759" fill-opacity="1"/><rect x="659.43" y="547.4" width="2.3" height="12" fill="#e15759" fill-opacity="1"/><rect x="663.50" y="547.4" width="2.3" height="12" fill="#e15759" fill-opacity="1"/><rect x="671.65" y="547.4" width="2.3" height="12" fill="#e15759" fill-opacity="1"/><rect x="679.80" y="547.4" width="2.3" height="12" fill="#e15759" fill-opacity="1"/><path d="M282.4 519.4H285.5M294.3 519.4H298.0" stroke="#555" stroke-width="1.3"/><rect x="285.5" y="513.9" width="5.0" height="11" fill="#9c9c9c" fill-opacity="0.55"/><rect x="290.5" y="513.9" width="3.8" height="11" fill="#ececec" fill-opacity="0.58"/><rect x="281.4" y="513.4" width="1.8" height="12" fill="#4d4d4d"/><rect x="297.0" y="513.4" width="1.8" height="12" fill="#4d4d4d"/><path d="M315.6 536.4H328.1M342.5 536.4H351.3" stroke="#555" stroke-width="1.3"/><rect x="328.1" y="530.9" width="7.3" height="11" fill="#9c9c9c" fill-opacity="0.55"/><rect x="335.4" y="530.9" width="7.1" height="11" fill="#ececec" fill-opacity="0.58"/><rect x="314.6" y="530.4" width="1.8" height="12" fill="#4d4d4d"/><rect x="350.3" y="530.4" width="1.8" height="12" fill="#4d4d4d"/><path d="M340.7 553.4H351.9M369.2 553.4H381.4" stroke="#555" stroke-width="1.3"/><rect x="351.9" y="547.9" width="8.2" height="11" fill="#9c9c9c" fill-opacity="0.55"/><rect x="360.1" y="547.9" width="9.1" height="11" fill="#ececec" fill-opacity="0.58"/><rect x="339.7" y="547.4" width="1.8" height="12" fill="#4d4d4d"/><rect x="380.4" y="547.4" width="1.8" height="12" fill="#4d4d4d"/><path d="M390.4 519.4H394.8M406.0 519.4H412.0" stroke="#555" stroke-width="1.3"/><rect x="394.8" y="513.9" width="6.2" height="11" fill="#9c9c9c" fill-opacity="0.55"/><rect x="401.0" y="513.9" width="5.0" height="11" fill="#ececec" fill-opacity="0.58"/><rect x="389.4" y="513.4" width="1.8" height="12" fill="#4d4d4d"/><rect x="411.0" y="513.4" width="1.8" height="12" fill="#4d4d4d"/><path d="M427.4 536.4H435.5M451.2 536.4H461.0" stroke="#555" stroke-width="1.3"/><rect x="435.5" y="530.9" width="7.5" height="11" fill="#9c9c9c" fill-opacity="0.55"/><rect x="443.0" y="530.9" width="8.2" height="11" fill="#ececec" fill-opacity="0.58"/><rect x="426.4" y="530.4" width="1.8" height="12" fill="#4d4d4d"/><rect x="460.0" y="530.4" width="1.8" height="12" fill="#4d4d4d"/><path d="M443.6 553.4H453.7M478.7 553.4H489.5" stroke="#555" stroke-width="1.3"/><rect x="453.7" y="547.9" width="12.5" height="11" fill="#9c9c9c" fill-opacity="0.55"/><rect x="466.2" y="547.9" width="12.5" height="11" fill="#ececec" fill-opacity="0.58"/><rect x="442.6" y="547.4" width="1.8" height="12" fill="#4d4d4d"/><rect x="488.5" y="547.4" width="1.8" height="12" fill="#4d4d4d"/><path d="M498.6 519.4H507.4M527.2 519.4H540.8" stroke="#555" stroke-width="1.3"/><rect x="507.4" y="513.9" width="9.6" height="11" fill="#9c9c9c" fill-opacity="0.55"/><rect x="517.0" y="513.9" width="10.2" height="11" fill="#ececec" fill-opacity="0.58"/><rect x="497.6" y="513.4" width="1.8" height="12" fill="#4d4d4d"/><rect x="539.8" y="513.4" width="1.8" height="12" fill="#4d4d4d"/><path d="M515.0 536.4H530.3M558.5 536.4H572.5" stroke="#555" stroke-width="1.3"/><rect x="530.3" y="530.9" width="13.8" height="11" fill="#9c9c9c" fill-opacity="0.55"/><rect x="544.1" y="530.9" width="14.4" height="11" fill="#ececec" fill-opacity="0.58"/><rect x="514.0" y="530.4" width="1.8" height="12" fill="#4d4d4d"/><rect x="571.5" y="530.4" width="1.8" height="12" fill="#4d4d4d"/><path d="M515.3 553.4H544.1M577.3 553.4H597.3" stroke="#555" stroke-width="1.3"/><rect x="544.1" y="547.9" width="17.6" height="11" fill="#9c9c9c" fill-opacity="0.55"/><rect x="561.7" y="547.9" width="15.6" height="11" fill="#ececec" fill-opacity="0.58"/><rect x="514.3" y="547.4" width="1.8" height="12" fill="#4d4d4d"/><rect x="596.3" y="547.4" width="1.8" height="12" fill="#4d4d4d"/><path d="M619.8 519.4H652.8M686.6 519.4H705.3" stroke="#555" stroke-width="1.3"/><rect x="652.8" y="513.9" width="19.4" height="11" fill="#9c9c9c" fill-opacity="0.55"/><rect x="672.2" y="513.9" width="14.4" height="11" fill="#ececec" fill-opacity="0.58"/><rect x="618.8" y="513.4" width="1.8" height="12" fill="#4d4d4d"/><rect x="704.3" y="513.4" width="1.8" height="12" fill="#4d4d4d"/><path d="M607.3 536.4H622.7M652.1 536.4H664.5" stroke="#555" stroke-width="1.3"/><rect x="622.7" y="530.9" width="15.6" height="11" fill="#9c9c9c" fill-opacity="0.55"/><rect x="638.3" y="530.9" width="13.8" height="11" fill="#ececec" fill-opacity="0.58"/><rect x="606.3" y="530.4" width="1.8" height="12" fill="#4d4d4d"/><rect x="663.5" y="530.4" width="1.8" height="12" fill="#4d4d4d"/><path d="M615.6 553.4H634.8M659.9 553.4H680.8" stroke="#555" stroke-width="1.3"/><rect x="634.8" y="547.9" width="12.3" height="11" fill="#9c9c9c" fill-opacity="0.55"/><rect x="647.1" y="547.9" width="12.8" height="11" fill="#ececec" fill-opacity="0.58"/><rect x="614.6" y="547.4" width="1.8" height="12" fill="#4d4d4d"/><rect x="679.8" y="547.4" width="1.8" height="12" fill="#4d4d4d"/></svg>
<div class="a" style="left:148.5px;width:300px;text-align:center;top:567.5px;font-size:11.3px;color:#999;">2</div>
<div class="a" style="left:181.89999999999998px;width:300px;text-align:center;top:567.5px;font-size:11.3px;color:#999;">4</div>
<div class="a" style="left:216.2px;width:300px;text-align:center;top:567.5px;font-size:11.3px;color:#999;">6</div>
<div class="a" style="left:240px;width:300px;text-align:center;top:567.5px;font-size:11.3px;color:#999;">0</div>
<div class="a" style="left:277.2px;width:300px;text-align:center;top:567.5px;font-size:11.3px;color:#999;">1</div>
<div class="a" style="left:318.3px;width:300px;text-align:center;top:567.5px;font-size:11.3px;color:#999;">2</div>
<div class="a" style="left:367.70000000000005px;width:300px;text-align:center;top:567.5px;font-size:11.3px;color:#999;">5</div>
<div class="a" style="left:394.9px;width:300px;text-align:center;top:567.5px;font-size:11.3px;color:#999;">6</div>
<div class="a" style="left:422px;width:300px;text-align:center;top:567.5px;font-size:11.3px;color:#999;">7</div>
<div class="a" style="left:448px;width:300px;text-align:center;top:567.5px;font-size:11.3px;color:#999;">8</div>
<div class="a" style="left:456.9px;width:300px;text-align:center;top:567.5px;font-size:11.3px;color:#999;">2</div>
<div class="a" style="left:497.79999999999995px;width:300px;text-align:center;top:567.5px;font-size:11.3px;color:#999;">3</div>
<div class="a" style="left:538.8px;width:300px;text-align:center;top:567.5px;font-size:11.3px;color:#999;">4</div>
<div class="a" style="left:302.10px;top:588px;font-size:9.8px;letter-spacing:0.361px;color:#555;-webkit-text-stroke:0.25px currentColor;">Petal Length</div>
<div class="a" style="left:412.20px;top:588px;font-size:9.8px;letter-spacing:0.487px;color:#555;-webkit-text-stroke:0.25px currentColor;">Petal Width</div>
<div class="a" style="left:517.20px;top:588px;font-size:9.8px;letter-spacing:0.294px;color:#555;-webkit-text-stroke:0.25px currentColor;">Sepal Length</div>
<div class="a" style="left:627.20px;top:588px;font-size:9.8px;letter-spacing:0.498px;color:#555;-webkit-text-stroke:0.25px currentColor;">Sepal Width</div>
<div class="a" style="left:712px;top:511px;width:14px;height:50px;background:#f0f0f0;"></div>
<div class="a" style="left:712px;top:525px;width:14px;height:20px;background:#cdcdcd;"></div>
<svg class="a" style="left:715px;top:516px;" width="8" height="5" viewBox="0 0 8 5"><path d="M1 4.5L4 1.5L7 4.5" stroke="#444" stroke-width="1.3" fill="none"/></svg>
<svg class="a" style="left:715px;top:551px;" width="8" height="5" viewBox="0 0 8 5"><path d="M1 0.5L4 3.5L7 0.5" stroke="#444" stroke-width="1.3" fill="none"/></svg>
<div class="a" style="left:195.60px;top:648px;font-size:13.2px;letter-spacing:0.595px;color:#7a7a7a;">Alustavan analyysin johtopäätös: Petal Legth melko hyvä mittari?</div>
<div class="a" style="left:4px;top:705px;width:871px;height:26px;background:#e5e5e5;border-top:1px solid #d4d4d4"></div>
<div class="a" style="left:4px;top:731px;width:871px;height:17px;background:#ebebeb;border-top:1px solid #dfdfdf"></div>
<div class="a" style="left:341px;top:705px;width:104px;height:26px;background:#f9f9f9;border-top:1px solid #d4d4d4"></div>
<div class="a" style="left:114px;top:706px;width:1px;height:25px;background:#d2d2d2;"></div>
<div class="a" style="left:175px;top:706px;width:1px;height:25px;background:#d2d2d2;"></div>
<div class="a" style="left:270px;top:706px;width:1px;height:25px;background:#d2d2d2;"></div>
<div class="a" style="left:341px;top:706px;width:1px;height:25px;background:#d2d2d2;"></div>
<div class="a" style="left:445px;top:706px;width:1px;height:25px;background:#d2d2d2;"></div>
<div class="a" style="left:520px;top:706px;width:1px;height:25px;background:#d2d2d2;"></div>
<div class="a" style="left:584px;top:706px;width:1px;height:25px;background:#d2d2d2;"></div>
<div class="a" style="left:680px;top:706px;width:1px;height:25px;background:#d2d2d2;"></div>
<div class="a" style="left:708px;top:706px;width:1px;height:25px;background:#d2d2d2;"></div>
<div class="a" style="left:735px;top:706px;width:1px;height:25px;background:#d2d2d2;"></div>
<div class="a" style="left:762px;top:706px;width:1px;height:25px;background:#d2d2d2;"></div>
<svg class="a" style="left:12px;top:713px;" width="7" height="9" viewBox="0 0 7 9"><path d="M0.5 1.8C0.5 0.5 5.5 0.5 5.5 1.8V7.5C5.5 8.7 0.5 8.7 0.5 7.5Z M0.5 2C0.5 3.2 5.5 3.2 5.5 2" stroke="#777" stroke-width="1" fill="none"/></svg>
<div class="a" style="left:24px;top:713px;font-size:10.3px;color:#737373;">Data Source</div>
<div class="a" style="left:120px;top:713px;font-size:10.45px;color:#737373;">Datan lkm</div>
<div class="a" style="left:180px;top:712px;font-size:10.75px;color:#737373;">Keskim. pituudet</div>
<div class="a" style="left:275px;top:712px;font-size:10.65px;color:#737373;">Sijaintiluvut</div>
<svg class="a" style="left:346px;top:712px;" width="11" height="11" viewBox="0 0 11 11"><rect x="1" y="1" width="9" height="9" fill="none" stroke="#707070" stroke-width="1.2"/><path d="M1 5.5H10M5.5 1V10" stroke="#707070" stroke-width="1.2"/></svg>
<div class="a" style="left:360.80px;top:711.5px;font-size:10.6px;letter-spacing:0.127px;color:#4a4a4a;-webkit-text-stroke:0.4px currentColor;">Alustava anlyysi</div>
<div class="a" style="left:450px;top:712px;font-size:10.8px;color:#737373;">Histogrammi</div>
<div class="a" style="left:526px;top:712px;font-size:10.5px;color:#737373;">Scatter 2D</div>
<svg class="a" style="left:590px;top:712px;" width="11" height="10" viewBox="0 0 11 10"><path d="M5.5 1.5C4 0.5 2 0.5 0.5 1V9C2 8.5 4 8.5 5.5 9.5C7 8.5 9 8.5 10.5 9V1C9 0.5 7 0.5 5.5 1.5V9.5" stroke="#666" stroke-width="1" fill="none"/></svg>
<div class="a" style="left:605px;top:712px;font-size:10.6px;color:#737373;">Analyysitarina</div>
<svg class="a" style="left:689px;top:713px;" width="14" height="14" viewBox="0 0 14 14"><rect x="0.5" y="0.5" width="9" height="9" fill="none" stroke="#777"/><path d="M3 7.5V5.5M5 7.5V3.5M7 7.5V4.5" stroke="#888"/><path d="M6 9.5H13M9.5 6V13" stroke="#e5e5e5" stroke-width="4"/><path d="M6 9.5H13M9.5 6V13" stroke="#4a4a4a" stroke-width="1.8"/></svg>
<svg class="a" style="left:716px;top:713px;" width="14" height="14" viewBox="0 0 14 14"><rect x="0.5" y="0.5" width="9" height="9" fill="none" stroke="#777"/><path d="M0.5 4.5H9.5M4.5 0.5V9.5" stroke="#777"/><path d="M6 9.5H13M9.5 6V13" stroke="#e5e5e5" stroke-width="4"/><path d="M6 9.5H13M9.5 6V13" stroke="#4a4a4a" stroke-width="1.8"/></svg>
<svg class="a" style="left:743px;top:713px;" width="14" height="14" viewBox="0 0 14 14"><path d="M0.5 0.5L4.7 1.8L9.3 0.5V9L4.7 10.2L0.5 9Z M4.7 1.8V10.2" stroke="#777" fill="none"/><path d="M6 9.5H13M9.5 6V13" stroke="#e5e5e5" stroke-width="4"/><path d="M6 9.5H13M9.5 6V13" stroke="#4a4a4a" stroke-width="1.8"/></svg>
<div class="a" style="left:564px;top:732px;width:1px;height:16px;background:#d6d6d6;"></div>
<div class="a" style="left:672px;top:732px;width:1px;height:16px;background:#d6d6d6;"></div>
<div class="a" style="left:695px;top:732px;width:1px;height:16px;background:#d6d6d6;"></div>
<div class="a" style="left:717px;top:732px;width:1px;height:16px;background:#d6d6d6;"></div>
<div class="a" style="left:757px;top:732px;width:1px;height:16px;background:#d6d6d6;"></div>
<div class="a" style="left:817px;top:732px;width:1px;height:16px;background:#d6d6d6;"></div>
<svg class="a" style="left:569px;top:733px;" width="10" height="12" viewBox="0 0 10 12"><circle cx="5" cy="3.5" r="2.6" fill="none" stroke="#666"/><path d="M0.8 11V9.5C0.8 7.5 2.5 6.8 5 6.8C7.5 6.8 9.2 7.5 9.2 9.5V11Z" fill="none" stroke="#666"/></svg>
<div class="a" style="left:586.20px;top:734.5px;font-size:10px;letter-spacing:-0.395px;color:#505050;">Ossi Nykänen</div>
<svg class="a" style="left:658px;top:738px;" width="7" height="4" viewBox="0 0 7 4"><path d="M0 0H7L3.5 4Z" fill="#222"/></svg>
<svg class="a" style="left:764px;top:737px;" width="47" height="6" viewBox="0 0 47 6"><g fill="#c4c4c4"><rect x="0" y="0" width="1.3" height="6"/><path d="M6 0V6L2.2 3Z"/><path d="M18.5 0V6L15 3Z"/><path d="M29 0V6L32.5 3Z"/><path d="M41 0V6L44.8 3Z"/><rect x="45.7" y="0" width="1.3" height="6"/></g></svg>
<svg class="a" style="left:825px;top:735px;" width="10" height="9" viewBox="0 0 10 9"><rect x="0.0" y="0.0" width="2.4" height="2.2" fill="#c2c2c2"/><rect x="0.0" y="3.1" width="2.4" height="2.2" fill="#c2c2c2"/><rect x="0.0" y="6.2" width="2.4" height="2.2" fill="#c2c2c2"/><rect x="3.5" y="0.0" width="2.4" height="2.2" fill="#c2c2c2"/><rect x="3.5" y="3.1" width="2.4" height="2.2" fill="#c2c2c2"/><rect x="3.5" y="6.2" width="2.4" height="2.2" fill="#c2c2c2"/><rect x="7.0" y="0.0" width="2.4" height="2.2" fill="#c2c2c2"/><rect x="7.0" y="3.1" width="2.4" height="2.2" fill="#c2c2c2"/><rect x="7.0" y="6.2" width="2.4" height="2.2" fill="#c2c2c2"/></svg>
<svg class="a" style="left:843px;top:735px;" width="10" height="9" viewBox="0 0 10 9"><rect x="0" y="0" width="9.5" height="5.5" fill="#c2c2c2"/><rect x="0" y="6.8" width="2.3" height="2" fill="#c2c2c2"/><rect x="3.6" y="6.8" width="2.3" height="2" fill="#c2c2c2"/><rect x="7.2" y="6.8" width="2.3" height="2" fill="#c2c2c2"/></svg>
<div class="a" style="left:861px;top:735px;width:9px;height:9px;background:#666;"></div>
</body></html>
